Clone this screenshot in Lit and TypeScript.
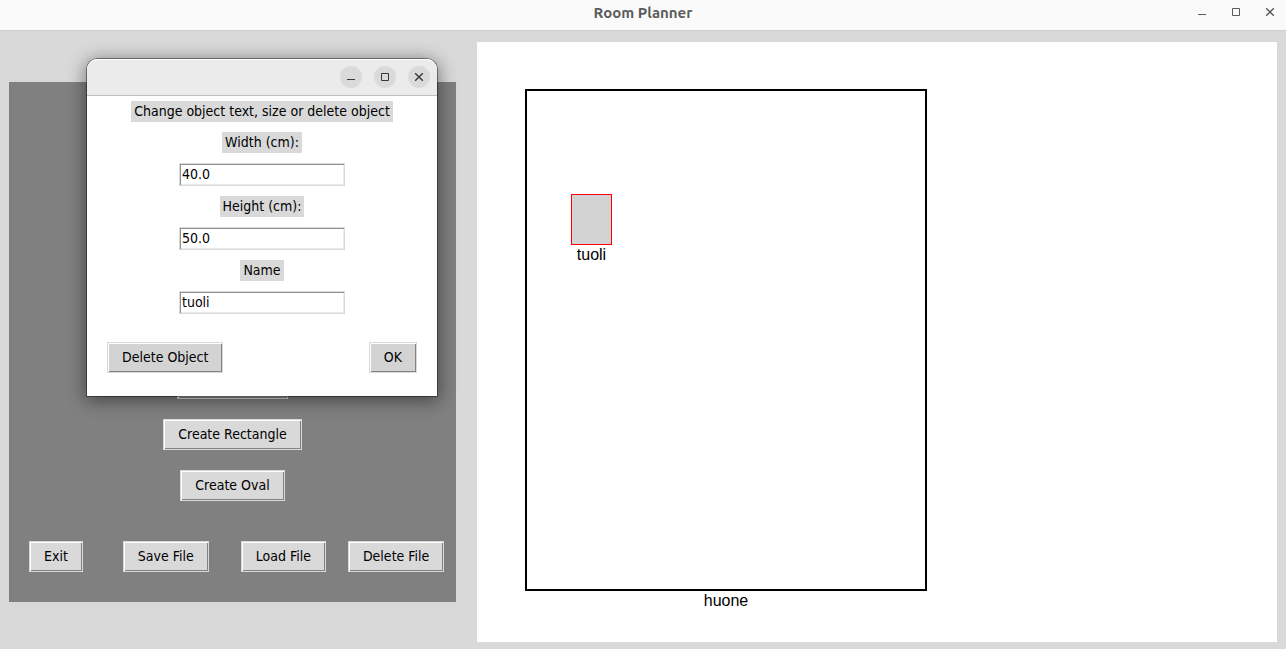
import { LitElement, html, css, svg } from "lit";
import { customElement, state } from "lit/decorators.js";

@customElement("window-controls")
class WindowControls extends LitElement {
  static styles = css`
    :host {
      display: flex;
      gap: 12px;
    }
    .control {
      width: 22px;
      height: 22px;
      padding: 0;
      border: 0;
      border-radius: 50%;
      background: var(--control-bg, transparent);
      color: var(--control-ink, #58585a);
    }
    .glyph {
      display: block;
      fill: none;
      stroke: currentColor;
    }
  `;

  render() {
    const icons = [
      ["Minimize", svg`<path d="M7 13.5h8" />`],
      ["Maximize", svg`<path d="M7.5 7.5h7v7h-7z" />`],
      ["Close", svg`<path d="M7.2 7.2l7.6 7.6M14.8 7.2l-7.6 7.6" stroke-width="1.4" />`],
    ];
    return icons.map(
      ([label, glyph]) => html`<button class="control" aria-label=${label}>
        <svg class="glyph" width="22" height="22" viewBox="0 0 22 22">${glyph}</svg>
      </button>`
    );
  }
}

const bevelButton = css`
  .push {
    height: 31px;
    padding: 0 14px;
    border: 1px solid #d9d9d9;
    border-radius: 0;
    background: #d9d9d9;
    box-shadow: inset 1px 1px #fff, inset -1px -1px #828282;
    color: #000;
    font: 14px/19px "DejaVu Sans Condensed", "Noto Sans", sans-serif;
    white-space: nowrap;
  }
`;

@customElement("object-dialog")
class ObjectDialog extends LitElement {
  @state() private fields = [
    { id: "width", label: "Width (cm):", value: "40.0" },
    { id: "height", label: "Height (cm):", value: "50.0" },
    { id: "name", label: "Name", value: "tuoli" },
  ];

  static styles = [
    bevelButton,
    css`
      :host {
        display: block;
        box-sizing: border-box;
        width: 352px;
        border: 1px solid rgba(0, 0, 0, 0.4);
        border-radius: 12px 12px 0 0;
        background: #fff;
        background-clip: padding-box;
        box-shadow: 0 3px 18px 1px rgba(0, 0, 0, 0.45);
        font: 14px/19px "DejaVu Sans Condensed", "Noto Sans", sans-serif;
        color: #000;
      }
      .titlebar {
        display: flex;
        justify-content: flex-end;
        padding: 7px 7px;
        border-bottom: 1px solid #bfbfbf;
        border-radius: 11px 11px 0 0;
        background: #ebebeb;
        box-shadow: inset 0 1px #fff;
        --control-bg: #dadada;
        --control-ink: #38383a;
      }
      .form {
        display: flex;
        flex-direction: column;
        align-items: center;
        gap: 10px;
        padding: 5px 20px 23px;
      }
      .caption {
        margin: 0;
        padding: 1px 3px;
        background: #d9d9d9;
        font: inherit;
      }
      .entry {
        box-sizing: border-box;
        width: 166px;
        height: 23px;
        padding: 0 2px 2px;
        border: 1px solid #d9d9d9;
        border-radius: 0;
        background: #fff;
        box-shadow: inset 1px 1px #929292, inset -1px -1px #ececec;
        color: #000;
        font: inherit;
        outline: none;
      }
      .actions {
        display: flex;
        align-self: stretch;
        justify-content: space-between;
        padding-top: 18px;
      }
      .actions .push {
        background: #d3d3d3;
      }
    `,
  ];

  render() {
    return html`
      <header class="titlebar"><window-controls></window-controls></header>
      <div class="form">
        <p class="caption">Change object text, size or delete object</p>
        ${this.fields.map(
          (f) => html`
            <label class="caption" for=${f.id}>${f.label}</label>
            <input class="entry" id=${f.id} type="text" .value=${f.value} />
          `
        )}
        <div class="actions">
          <button class="push">Delete Object</button>
          <button class="push">OK</button>
        </div>
      </div>
    `;
  }
}

@customElement("tool-panel")
class ToolPanel extends LitElement {
  static styles = [
    bevelButton,
    css`
      :host {
        display: flex;
        flex-direction: column;
        justify-content: flex-end;
        gap: 40px;
        box-sizing: border-box;
        padding: 30px 10px 30px 20px;
        background: #808080;
      }
      .shapes {
        display: flex;
        flex-direction: column;
        align-items: center;
        gap: 20px;
        padding-right: 10px;
      }
      .files {
        display: flex;
        gap: 22px;
      }
      .exit {
        margin-right: 18px;
      }
      .save {
        margin-right: 10px;
      }
    `,
  ];

  render() {
    return html`
      <div class="shapes">
        <button class="push">Create Room</button>
        <button class="push">Create Rectangle</button>
        <button class="push">Create Oval</button>
      </div>
      <div class="files">
        <button class="push exit">Exit</button>
        <button class="push save">Save File</button>
        <button class="push">Load File</button>
        <button class="push">Delete File</button>
      </div>
    `;
  }
}

@customElement("room-canvas")
class RoomCanvas extends LitElement {
  static styles = css`
    :host {
      display: block;
      position: relative;
      background: #fff;
      color: #000;
      font: 16px/20px "Liberation Sans", Arial, sans-serif;
      text-align: center;
    }
    .item {
      position: absolute;
      margin: 0;
    }
    .room {
      left: 48px;
      top: 47px;
    }
    .chair {
      left: 94px;
      top: 152px;
    }
    .shape {
      box-sizing: border-box;
    }
    .room .shape {
      width: 402px;
      height: 502px;
      border: 2px solid #000;
    }
    .chair .shape {
      width: 41px;
      height: 51px;
      border: 1px solid #f00;
      background: #d3d3d3;
    }
  `;

  render() {
    return html`
      <figure class="item room">
        <div class="shape"></div>
        <figcaption>huone</figcaption>
      </figure>
      <figure class="item chair">
        <div class="shape"></div>
        <figcaption>tuoli</figcaption>
      </figure>
    `;
  }
}

@customElement("app-root")
class AppRoot extends LitElement {
  static styles = css`
    :host {
      display: flex;
      flex-direction: column;
      position: relative;
      min-height: 100vh;
      background: #d9d9d9;
    }
    .titlebar {
      display: grid;
      grid-template-columns: 1fr auto 1fr;
      align-items: center;
      box-sizing: border-box;
      height: 31px;
      padding: 0 5px 6px;
      border-bottom: 1px solid #cfcfcf;
      background: #fafafa;
    }
    .title {
      grid-column: 2;
      margin: 0;
      padding-top: 2px;
      color: #5c5c5c;
      font: bold 15px/22px Ubuntu, "Noto Sans", sans-serif;
    }
    .controls {
      justify-self: end;
    }
    .workspace {
      display: flex;
      flex: 1;
      gap: 21px;
      padding: 11px 9px 7px;
    }
    .panel {
      flex: 0 0 447px;
      margin: 40px 0;
    }
    .canvas {
      flex: 1;
      min-height: 600px;
    }
    .dialog {
      position: absolute;
      left: 86px;
      top: 58px;
    }
  `;

  render() {
    return html`
      <header class="titlebar">
        <h1 class="title">Room Planner</h1>
        <window-controls class="controls"></window-controls>
      </header>
      <main class="workspace">
        <tool-panel class="panel"></tool-panel>
        <room-canvas class="canvas"></room-canvas>
      </main>
      <object-dialog class="dialog" role="dialog" aria-label="Change object"></object-dialog>
    `;
  }
}
